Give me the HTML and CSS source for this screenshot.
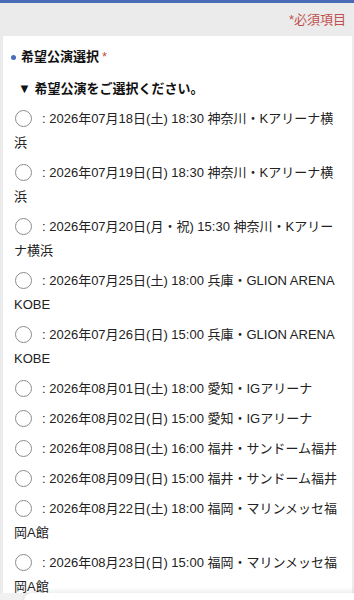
FILE: index.html
```html
<!DOCTYPE html>
<html lang="ja">
<head>
  <meta charset="UTF-8">
  <meta name="viewport" content="width=device-width, initial-scale=1">
  <title>希望公演選択</title>
  <link rel="stylesheet" href="styles.css">
</head>
<body>
  <div class="required-note">*必須項目</div>
  <div class="card">
    <h2 class="field-title">希望公演選択 <span class="mark">*</span></h2>
    <p class="lead">▼ 希望公演をご選択ください。</p>
    <ul class="choices">
      <li><span class="radio"></span>: 2026年07月18日(土) 18:30 神奈川・Kアリーナ横浜</li>
      <li><span class="radio"></span>: 2026年07月19日(日) 18:30 神奈川・Kアリーナ横浜</li>
      <li><span class="radio"></span>: 2026年07月20日(月・祝) 15:30 神奈川・Kアリーナ横浜</li>
      <li><span class="radio"></span>: 2026年07月25日(土) 18:00 兵庫・GLION ARENA KOBE</li>
      <li><span class="radio"></span>: 2026年07月26日(日) 15:00 兵庫・GLION ARENA KOBE</li>
      <li><span class="radio"></span>: 2026年08月01日(土) 18:00 愛知・IGアリーナ</li>
      <li><span class="radio"></span>: 2026年08月02日(日) 15:00 愛知・IGアリーナ</li>
      <li><span class="radio"></span>: 2026年08月08日(土) 16:00 福井・サンドーム福井</li>
      <li><span class="radio"></span>: 2026年08月09日(日) 15:00 福井・サンドーム福井</li>
      <li><span class="radio"></span>: 2026年08月22日(土) 18:00 福岡・マリンメッセ福岡A館</li>
      <li><span class="radio"></span>: 2026年08月23日(日) 15:00 福岡・マリンメッセ福岡A館</li>
    </ul>
  </div>
  <div class="bottom-bar"><div class="bottom-panel"></div></div>
</body>
</html>
```

FILE: styles.css
```css
body {
  margin: 0;
  padding: 0;
  background-color: #ebebeb;
  border-top: 3px solid #4a6cb7;
  font-family: "Liberation Sans", "Noto Sans CJK JP", sans-serif;
  color: #222;
}
.required-note {
  height: 33px;
  line-height: 33px;
  text-align: right;
  padding-right: 8px;
  font-size: 13px;
  color: #c0504d;
}
.card {
  margin: 0 2px 0 3px;
  background-color: #fff;
  padding: 12px 10px 40px 11px;
}
.field-title {
  margin: 0;
  font-size: 13px;
  line-height: 18px;
  font-weight: bold;
  color: #111;
  display: flex;
  align-items: center;
}
.field-title::before {
  content: "";
  width: 5px;
  height: 5px;
  border-radius: 50%;
  background-color: #4a6cb7;
  margin-left: -3px;
  margin-right: 5px;
  display: inline-block;
}
.field-title .mark {
  color: #c0504d;
  font-weight: normal;
  margin-left: 3px;
}
.lead {
  margin: 14px 0 0 4px;
  font-size: 13px;
  line-height: 18px;
  font-weight: bold;
  color: #111;
}
.choices {
  list-style: none;
  margin: 9px 0 0 0;
  padding: 0;
}
.choices li {
  font-size: 13px;
  line-height: 24px;
  margin-bottom: 6px;
}
.radio {
  display: inline-block;
  width: 15px;
  height: 15px;
  border: 1px solid #8c8c8c;
  border-radius: 50%;
  background-color: #fff;
  vertical-align: -4px;
  margin: 0 10px 0 1px;
}
.bottom-bar {
  position: fixed;
  left: 0;
  right: 0;
  top: 593px;
  height: 20px;
  background-color: #f1f1f1;
}
.bottom-panel {
  margin-left: 24px;
  height: 100%;
  background-color: #fff;
  border-top-left-radius: 8px;
  box-shadow: 0 -2px 5px rgba(0, 0, 0, 0.08);
}
```
